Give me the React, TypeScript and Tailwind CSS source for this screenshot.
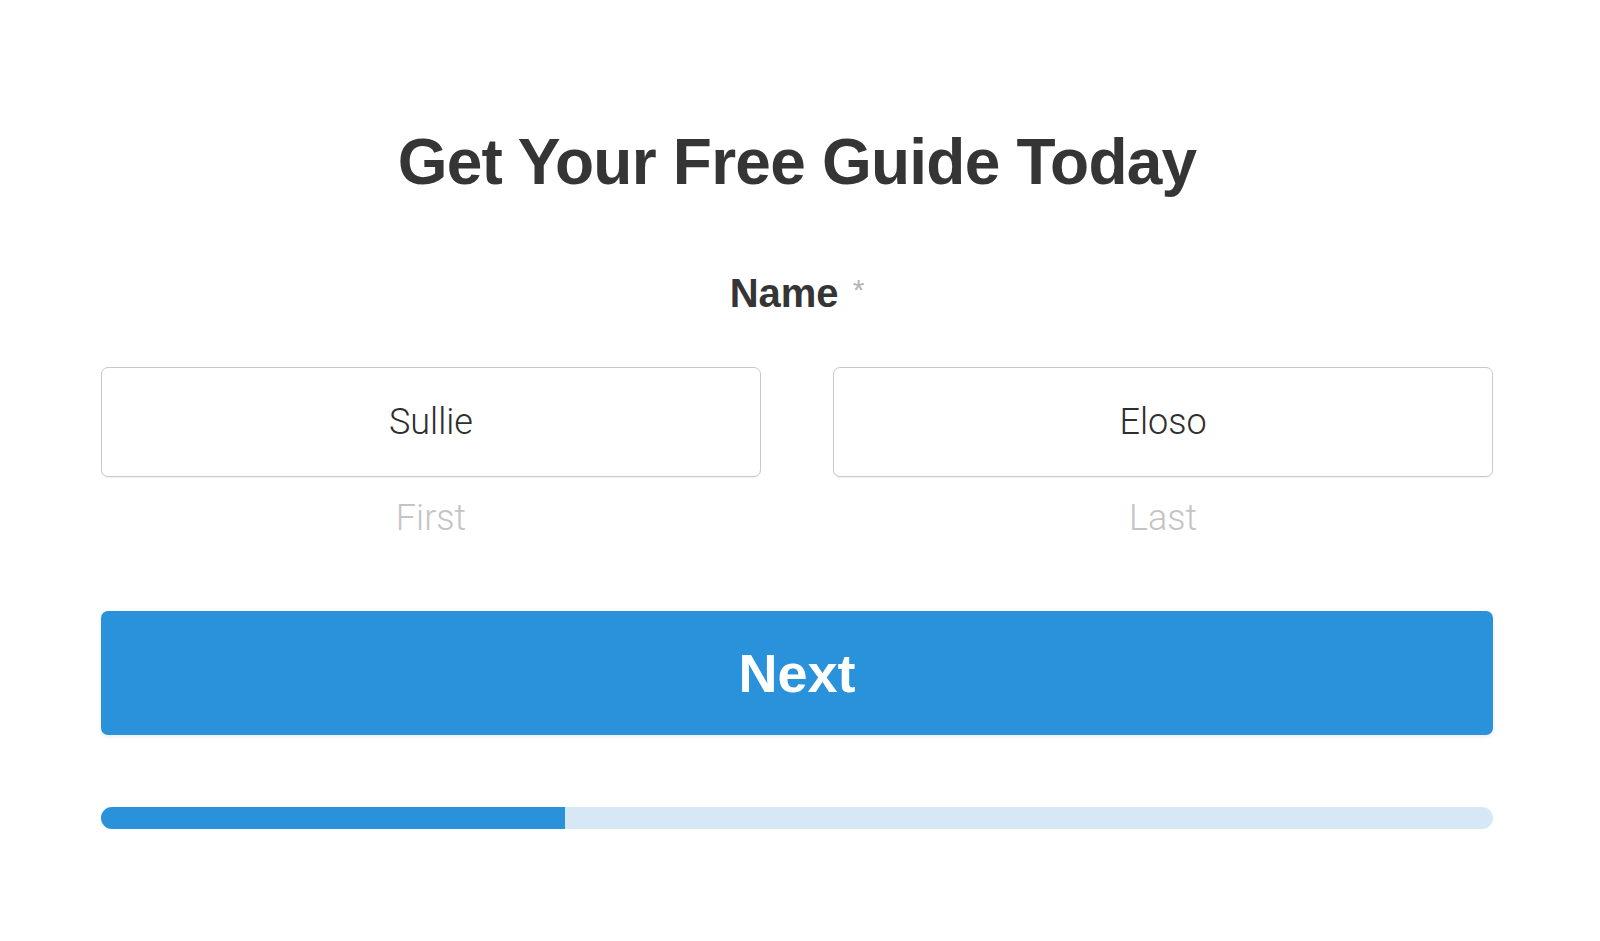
import React from 'react'

const sans = "font-['Liberation_Sans',Arial,sans-serif]"
const light = "font-['Roboto','Liberation_Sans',sans-serif] font-light"

function NameField({ value, hint }: { value: string; hint: string }) {
  return (
    <div className="flex flex-col">
      <div className="flex h-[110px] items-center justify-center rounded-[7px] border border-[#c9c9c9] bg-white shadow-[0_1px_1px_rgba(0,0,0,0.06)]">
        <span className={`${light} text-[36px] leading-[36px] text-[#2e2e2e]`}>{value}</span>
      </div>
      <span className={`${light} mt-[23px] text-center text-[36px] leading-[36px] text-[#c4c4c4]`}>{hint}</span>
    </div>
  )
}

export default function App() {
  const progress = 33.3

  return (
    <div className={`${sans} min-h-screen bg-white pl-[101px] pr-[107px] pt-[130px]`}>
      {/* 제목 */}
      <h1 className="text-center text-[64px] font-bold leading-[64px] tracking-[-0.012em] text-[#353535]">
        Get Your Free Guide Today
      </h1>

      {/* 이름 라벨 */}
      <div className="mt-[79px] flex items-start justify-center">
        <span className="text-[40px] font-bold leading-[40px] text-[#353535]">Name</span>
        <span className="ml-[14px] mt-[2px] text-[30px] leading-[30px] text-[#b4b4b4]">*</span>
      </div>

      {/* 입력 필드 */}
      <div className="mt-[54px] grid grid-cols-2 gap-[72px]">
        <NameField value="Sullie" hint="First" />
        <NameField value="Eloso" hint="Last" />
      </div>

      <button className="mt-[75px] flex h-[124px] w-full items-center justify-center rounded-[7px] bg-[#2a92da] shadow-[0_2px_4px_rgba(0,0,0,0.08)]">
        <span className="text-[54px] font-bold leading-[54px] text-white">Next</span>
      </button>

      {/* 진행 바 */}
      <div className="mt-[72px] h-[22px] w-full overflow-hidden rounded-full bg-[#d6e8f6]">
        <div className="h-full bg-[#2a92da]" style={{ width: `${progress}%` }} />
      </div>
    </div>
  )
}
